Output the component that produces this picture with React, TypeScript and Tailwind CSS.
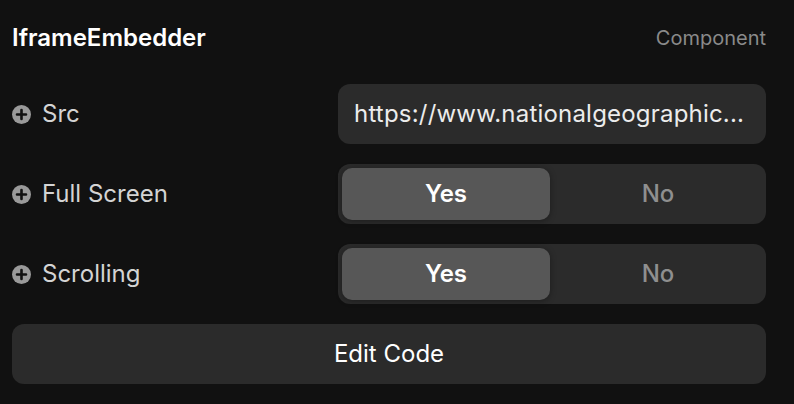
import React from "react";

function PlusIcon() {
  return (
    <svg width="19" height="19" viewBox="0 0 19 19" className="shrink-0">
      <circle cx="9.5" cy="9.5" r="9.5" fill="#9a9a9a" />
      <path d="M9.5 5v9M5 9.5h9" stroke="#111111" strokeWidth="2.6" strokeLinecap="round" />
    </svg>
  );
}

function Label({ text }: { text: string }) {
  return (
    <div className="flex items-center gap-[11px] w-[326px] shrink-0">
      <PlusIcon />
      <span className="text-[24px] text-[#d4d4d4] leading-none">{text}</span>
    </div>
  );
}

function Segmented() {
  return (
    <div className="flex-1 h-[60px] bg-[#2b2b2b] rounded-[12px] p-[4px] flex gap-[4px]">
      <div className="flex-1 rounded-[10px] bg-[#575757] shadow-[0_1px_6px_rgba(0,0,0,0.35)] flex items-center justify-center text-white font-semibold text-[24px]">
        Yes
      </div>
      <div className="flex-1 flex items-center justify-center text-[#8f8f8f] font-medium text-[24px]">
        No
      </div>
    </div>
  );
}

export default function App() {
  return (
    <div
      className="w-[794px] h-[404px] bg-[#111111] px-[12px] pt-[12px] flex flex-col gap-[20px]"
      style={{ fontFamily: "Inter, 'Noto Sans', sans-serif" }}
    >
      <div className="h-[52px] flex items-center justify-between pr-[16px]">
        <span className="text-white font-semibold text-[24px]">IframeEmbedder</span>
        <span className="text-[#8a8a8a] text-[20px]">Component</span>
      </div>
      <div className="flex items-center pr-[16px]">
        <Label text="Src" />
        <div className="flex-1 h-[60px] bg-[#2b2b2b] rounded-[12px] flex items-center px-[16px] text-[24px] text-[#ececec] tracking-[0.2px]">
          https://www.nationalgeographic...
        </div>
      </div>
      <div className="flex items-center pr-[16px]">
        <Label text="Full Screen" />
        <Segmented />
      </div>
      <div className="flex items-center pr-[16px]">
        <Label text="Scrolling" />
        <Segmented />
      </div>
      <div className="pr-[16px]">
        <div className="h-[60px] bg-[#2b2b2b] rounded-[12px] flex items-center justify-center text-white text-[24px] font-normal">
          Edit Code
        </div>
      </div>
    </div>
  );
}
